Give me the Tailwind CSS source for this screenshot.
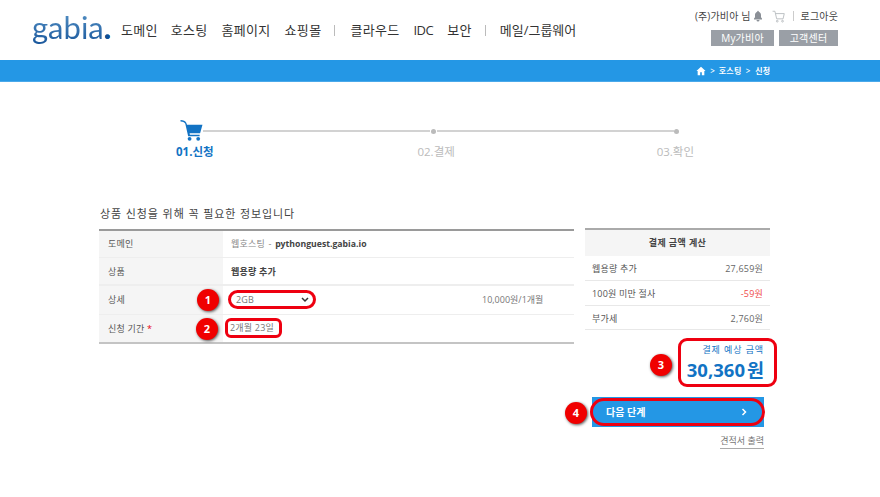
<!DOCTYPE html>
<html lang="ko">
<head>
  <meta charset="UTF-8" />
  <title>gabia 신청</title>
  <script src="https://cdn.jsdelivr.net/npm/@tailwindcss/browser@4"></script>
</head>
<body class="bg-white w-[880px] h-[497px] overflow-hidden text-[#555] font-['Open_Sans','Noto_Sans_CJK_KR',sans-serif]">

  <!-- 상단 헤더 -->
  <header class="h-[60px] flex pl-[32px] pr-[42px] justify-between">
    <div class="flex items-start">
      <span class="w-[78px] mt-[5px] text-[31px] leading-[44px] whitespace-nowrap font-['Lato',sans-serif] bg-gradient-to-b from-[#5f9ccc] to-[#0f4f96] bg-clip-text text-transparent">gabia<span class="font-bold text-[#0f4f96]">.</span></span>
      <nav class="ml-[11px] mt-[20px] flex items-center text-[13px] leading-[20px] tracking-[0.3px] text-[#333]">
        <a>도메인</a>
        <a class="ml-[13px]">호스팅</a>
        <a class="ml-[14px]">홈페이지</a>
        <a class="ml-[14px]">쇼핑몰</a>
        <span class="ml-[13px] w-px h-[11px] bg-[#bbb]"></span>
        <a class="ml-[15px]">클라우드</a>
        <a class="ml-[14px] tracking-[-0.5px]">IDC</a>
        <a class="ml-[14px]">보안</a>
        <span class="ml-[13px] w-px h-[11px] bg-[#bbb]"></span>
        <a class="ml-[14px] tracking-normal">메일/그룹웨어</a>
      </nav>
    </div>
    <div class="flex flex-col items-end pt-[9px]">
      <div class="flex items-center text-[10px] leading-[14px] h-[14px] tracking-[0.15px] text-[#444]">
        <span>(주)가비아 님</span>
        <svg class="ml-[1px] w-[12px] h-[12px]" viewBox="0 0 24 24" fill="#8a8f96"><path d="M12 23a3 3 0 0 0 3-3H9a3 3 0 0 0 3 3zm8-6-2-2.500V10c0-3.200-2-5.700-4.500-6.400V3a1.500 1.500 0 0 0-3 0v.6C8 4.300 6 6.800 6 10v4.500L4 17v2h16z"/></svg>
        <svg class="ml-[8px] w-[14px] h-[13px]" viewBox="0 0 24 22" fill="none" stroke="#b5b9bd" stroke-width="1.500"><path d="M1 2h4l3 13h11l2-9H6"/><circle cx="9" cy="19" r="1.500"/><circle cx="18" cy="19" r="1.500"/></svg>
        <span class="ml-[7px] w-px h-[10px] bg-[#ccc]"></span>
        <span class="ml-[7px]">로그아웃</span>
      </div>
      <div class="mt-[7px] flex gap-[5px] text-[10px] tracking-[0.2px]">
        <a class="w-[63px] h-[16px] leading-[16px] text-center bg-[#9a9fa6] text-white">My가비아</a>
        <a class="w-[59px] h-[16px] leading-[16px] text-center bg-[#9a9fa6] text-white">고객센터</a>
      </div>
    </div>
  </header>

  <!-- 파란 경로 바 -->
  <div class="h-[22px] bg-[#2497e5] border-b border-[#4aa9ea] flex items-center justify-end pr-[110px] text-white text-[8px] font-semibold">
    <svg class="w-[10px] h-[10px]" viewBox="0 0 24 24" fill="#fff"><path d="M12 2 1 12h3v10h6v-7h4v7h6V12h3z"/></svg>
    <span class="ml-[4px]">&gt;</span>
    <span class="ml-[4px] tracking-[0.3px]">호스팅</span>
    <span class="ml-[4px]">&gt;</span>
    <span class="ml-[5px]">신청</span>
  </div>

  <!-- 단계 표시 -->
  <div class="ml-[176px] w-[518px] h-[131px] pt-[38px]">
    <div class="relative h-[22px] flex items-center pl-[27px] pr-[15px]">
      <svg class="absolute left-[4px] top-0 w-[23px] h-[21px]" viewBox="0 0 23 22" fill="#1273c4"><path d="M0 0c3 0 5 1 6 3l.8 2H23l-2.500 9H9.500L9.800 15.500H20V17H8L5 4C4.500 2.500 3 1.500 0 1.500z"/><circle cx="9.500" cy="19.700" r="2"/><circle cx="18.500" cy="19.700" r="2"/></svg>
      <div class="flex-1 h-[2px] bg-[#d2d2d2]"></div>
      <span class="ml-[1px] mr-[1px] w-[5px] h-[5px] rounded-full bg-[#bbb]"></span>
      <div class="flex-[1.040] h-[2px] bg-[#d2d2d2]"></div>
      <span class="w-[5px] h-[5px] rounded-full bg-[#bbb]"></span>
    </div>
    <div class="mt-[1px] flex justify-between text-[11.500px] leading-[18px] text-[#bbb]">
      <span class="font-bold text-[#1273c4]">01.신청</span>
      <span class="ml-[2px]">02.결제</span>
      <span>03.확인</span>
    </div>
  </div>

  <!-- 본문 -->
  <main class="ml-[99px] w-[671px] flex gap-[11px] mt-[-8px]">
    <div class="w-[475px]">
      <h2 class="h-[22px] text-[11px] leading-[18px] tracking-[0.9px] text-[#444] pl-px mb-[2px]">상품 신청을 위해 꼭 필요한 정보입니다</h2>
      <div class="border-t-2 border-b-2 border-t-[#9a9a9a] border-b-[#c4c4c4] text-[9px] tracking-[0.2px] text-[#555]">
        <div class="flex h-[27px] border-b border-[#eee]">
          <div class="w-[124px] bg-[#f5f5f5] pl-[9px] leading-[26px]">도메인</div>
          <div class="pl-[8px] leading-[26px] text-[#888]">웹호스팅 <span class="mx-[1px]">-</span> <b class="text-[#444] text-[8.700px] tracking-normal">pythonguest.gabia.io</b></div>
        </div>
        <div class="flex h-[28px] border-b-2 border-[#eee]">
          <div class="w-[124px] bg-[#f5f5f5] pl-[9px] leading-[28px]">상품</div>
          <div class="pl-[8px] leading-[28px] font-bold text-[#444]">웹용량 추가</div>
        </div>
        <div class="flex h-[29px] border-b border-[#eee]">
          <div class="relative w-[124px] bg-[#f5f5f5] pl-[9px] leading-[28px]">상세
            <span class="absolute left-[98px] top-[3px] w-[22px] h-[22px] rounded-full bg-[#f00000] shadow-[1px_1px_3px_#555] text-white text-[11px] font-bold text-center leading-[22px]">1</span>
          </div>
          <div class="relative flex-1 flex items-center">
            <div class="absolute left-[5px] top-[4px] w-[88px] h-[19px] border-[3px] border-[#ee0010] rounded-[10px] pl-[5px] pr-[4px] flex items-center justify-between text-[#777]">
              <span>2GB</span>
              <svg class="w-[8px] h-[6px]" viewBox="0 0 8 6" fill="none" stroke="#333" stroke-width="1.500"><path d="M1 1l3 3 3-3"/></svg>
            </div>
            <span class="absolute left-[259px] top-0 leading-[27px] tracking-normal text-[#777]">10,000원/1개월</span>
          </div>
        </div>
        <div class="flex h-[27px]">
          <div class="relative w-[124px] bg-[#f5f5f5] pl-[9px] leading-[27px]">신청 기간 <span class="text-[#e60012]">*</span>
            <span class="absolute left-[97px] top-[3px] w-[22px] h-[22px] rounded-full bg-[#f00000] shadow-[1px_1px_3px_#555] text-white text-[11px] font-bold text-center leading-[22px]">2</span>
          </div>
          <div class="relative flex-1">
            <div class="absolute left-[2px] top-[3px] w-[57px] h-[20px] border-[3px] border-[#ee0010] rounded-[6px] pl-[2px] leading-[14px] text-[#777] whitespace-nowrap">2개월 23일</div>
          </div>
        </div>
      </div>
    </div>

    <!-- 결제 금액 -->
    <aside class="w-[185px] pt-[23px] flex flex-col items-end">
      <div class="w-full border-t-2 border-[#aaa] text-[9px] tracking-[0.2px]">
        <div class="h-[26px] bg-[#f5f5f5] text-center font-bold text-[#444] leading-[26px] tracking-[0.4px]">결제 금액 계산</div>
        <div class="h-[25px] px-[7px] pt-[2px] flex justify-between items-center border-b border-[#e8e8e8]"><span>웹용량 추가</span><span class="text-[#666]">27,659원</span></div>
        <div class="h-[25px] px-[7px] pt-[2px] flex justify-between items-center border-b border-[#e8e8e8]"><span>100원 미만 절사</span><span class="text-[#ef4a4a]">-59원</span></div>
        <div class="h-[24px] px-[7px] pt-[2px] flex justify-between items-center border-b border-[#e8e8e8]"><span>부가세</span><span class="text-[#666]">2,760원</span></div>
      </div>
      <div class="relative mt-[8px] mr-[-7px] w-[99px] h-[49px] border-[3px] border-[#ee0010] rounded-[9px] text-right pr-[10px] pt-[3px] text-[#1273c4]">
        <div class="text-[9px] leading-[12px] tracking-[0.9px] whitespace-nowrap">결제 예상 금액</div>
        <div class="text-[18.500px] leading-[26px] font-bold mt-[1px] whitespace-nowrap">30,360<span class="ml-[2px]">원</span></div>
        <span class="absolute left-[-31px] top-[13px] w-[22px] h-[22px] rounded-full bg-[#f00000] shadow-[1px_1px_3px_#555] text-white text-[11px] font-bold text-center leading-[22px]">3</span>
      </div>
      <div class="relative mt-[10px] mr-[6px] w-[172px] h-[30px] bg-[#2497e5] text-white text-[10px] font-bold flex items-center justify-between pl-[14px] pr-[17px]">
        <span>다음 단계</span>
        <svg class="w-[6px] h-[8px]" viewBox="0 0 6 8" fill="none" stroke="#fff" stroke-width="1.500"><path d="M1.500 1l3 3-3 3"/></svg>
        <div class="absolute left-[-2px] right-[-1px] top-[1px] h-[28px] border-[3px] border-[#ee0010] rounded-[14px]"></div>
        <span class="absolute left-[-27px] top-[5px] w-[22px] h-[22px] rounded-full bg-[#f00000] shadow-[1px_1px_3px_#555] text-white text-[11px] font-bold text-center leading-[22px]">4</span>
      </div>
      <a class="mt-[7px] mr-[6px] text-[9px] leading-[13px] text-[#777] border-b border-[#aaa] pb-px">견적서 출력</a>
    </aside>
  </main>
</body>
</html>
